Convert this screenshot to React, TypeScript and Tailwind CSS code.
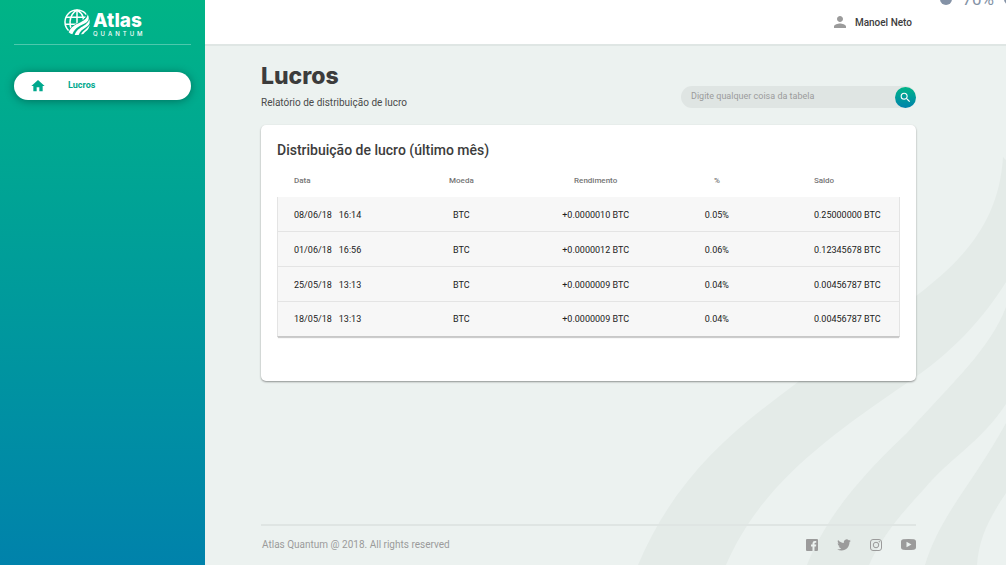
import { MdHome, MdPerson, MdSearch } from "react-icons/md";

const rows = [
  { date: "08/06/18", time: "16:14", coin: "BTC", gain: "+0.0000010 BTC", pct: "0.05%", balance: "0.25000000 BTC" },
  { date: "01/06/18", time: "16:56", coin: "BTC", gain: "+0.0000012 BTC", pct: "0.06%", balance: "0.12345678 BTC" },
  { date: "25/05/18", time: "13:13", coin: "BTC", gain: "+0.0000009 BTC", pct: "0.04%", balance: "0.00456787 BTC" },
  { date: "18/05/18", time: "13:13", coin: "BTC", gain: "+0.0000009 BTC", pct: "0.04%", balance: "0.00456787 BTC" },
];

function Globe() {
  return (
    <svg viewBox="0 0 78 78" className="size-[26px] shrink-0" fill="none" aria-hidden="true">
      <defs>
        <mask id="globe-cut">
          <rect width="78" height="78" fill="#fff" />
          <path d="M8 78C14 56 30 46 48 38C62 31 68 22 68 8L78 8V78Z" fill="#000" />
        </mask>
      </defs>
      <g stroke="#fff" strokeWidth="4.5" mask="url(#globe-cut)">
        <circle cx="39" cy="39" r="36" />
        <path d="M39 3V78M6 25H72M3 46H75" />
        <path d="M39 3C12 18 12 58 34 76M39 3C58 14 62 32 56 46" />
      </g>
      <g fill="#fff">
        <path d="M14 70C20 54 34 47 50 40C64 33 70 26 71 16C76 25 76 33 68 40C52 50 34 54 25 76Q18 74 14 70Z" />
        <path d="M32 77C39 59 54 54 64 47Q74 40 76 31C79 42 76 49 66 55C55 62 48 67 44 78Q38 79 32 77Z" />
        <path d="M51 76C56 65 68 62 77 47C76 56 72 62 67 66Q62 70 59 74Q55 76 51 76Z" />
      </g>
    </svg>
  );
}

function Waves() {
  return (
    <svg viewBox="0 0 370 410" className="pointer-events-none absolute right-0 bottom-0 h-[410px] w-[370px]" fill="#e4ebe8" aria-hidden="true">
      <path d="M2 410C32 339 77 291 137 246C190 205 235 176 280 141C330 103 363 65 367 2L370 5V127C347 164 316 198 271 228C184 287 123 334 90 410Z" />
      <path d="M171 410C190 362 226 320 271 278C318 226 354 194 370 152V249C345 287 315 302 288 334C263 361 245 383 233 410Z" />
      <path d="M289 410C304 360 340 324 370 268V338C354 362 343 382 341 410Z" />
    </svg>
  );
}

function Facebook() {
  return (
    <svg viewBox="0 0 24 24" className="size-3" fill="currentColor" aria-hidden="true">
      <path d="M2 0H22Q24 0 24 2V22Q24 24 22 24H17V15H20L20.500 11H17V9Q17 7.500 19 7.500H20.500V4H17.500Q13 4 13 8.500V11H10V15H13V24H2Q0 24 0 22V2Q0 0 2 0Z" />
    </svg>
  );
}

function Twitter() {
  return (
    <svg viewBox="0 1.500 24 21" className="h-3 w-[14px]" fill="currentColor" aria-hidden="true">
      <path d="M23.953 4.570a10 10 0 01-2.825.775 4.958 4.958 0 002.163-2.723c-.951.555-2.005.959-3.127 1.184a4.920 4.920 0 00-8.384 4.482C7.690 8.095 4.067 6.130 1.640 3.162a4.822 4.822 0 00-.666 2.475c0 1.710.870 3.213 2.188 4.096a4.904 4.904 0 01-2.228-.616v.060a4.923 4.923 0 003.946 4.827 4.996 4.996 0 01-2.212.085 4.936 4.936 0 004.604 3.417 9.867 9.867 0 01-6.102 2.105c-.390 0-.779-.023-1.170-.067a13.995 13.995 0 007.557 2.209c9.053 0 13.998-7.496 13.998-13.985 0-.210 0-.420-.015-.630A9.935 9.935 0 0024 4.590z" />
    </svg>
  );
}

function Instagram() {
  return (
    <svg viewBox="0 0 24 24" className="size-3" fill="none" stroke="currentColor" strokeWidth="2" aria-hidden="true">
      <rect x="1" y="1" width="22" height="22" rx="5" />
      <circle cx="12" cy="12" r="5.500" />
      <circle cx="18.500" cy="5.500" r=".6" />
    </svg>
  );
}

function Youtube() {
  return (
    <svg viewBox="0 0 30 22" className="h-[11px] w-[15px]" fill="currentColor" fillRule="evenodd" aria-hidden="true">
      <path d="M4 .5Q15 -.5 26 .5Q30 1 30 5V17Q30 21 26 21.500Q15 22.500 4 21.500Q0 21 0 17V5Q0 1 4 .5ZM11 5.500V16.500L21 11Z" />
    </svg>
  );
}

const socials = [
  { name: "Facebook", Icon: Facebook },
  { name: "Twitter", Icon: Twitter },
  { name: "Instagram", Icon: Instagram },
  { name: "YouTube", Icon: Youtube },
];

function Sidebar() {
  return (
    <aside className="w-[205px] shrink-0 bg-linear-to-b from-[#00b486] to-[#0082ab] px-[14px]">
      <a href="#" className="flex h-[45px] items-center justify-center gap-[3px] border-b border-white/30 text-white">
        <Globe />
        <span className="flex w-12 flex-col pt-1">
          <span className="font-[Inter,sans-serif] text-[19px] leading-[18px] font-extrabold">Atlas</span>
          <span className="font-[Inter,sans-serif] text-[6px] leading-[7px] font-medium tracking-[3px]">QUANTUM</span>
        </span>
      </a>
      <nav className="pt-[27px]">
        <a href="#" aria-current="page" className="flex h-7 items-center rounded-full bg-white pl-4 text-[9px] font-bold text-[#00a88d] shadow-[0_1px_10px_rgba(0,0,0,0.35)]">
          <MdHome className="size-4" />
          <span className="pl-[22px]">Lucros</span>
        </a>
      </nav>
    </aside>
  );
}

function Header() {
  return (
    <header className="relative flex h-[46px] shrink-0 items-center justify-end overflow-hidden border-b-2 border-[#dfe6e4] bg-white pr-[94px]">
      <button type="button" className="flex items-center gap-[6px] text-[10px] font-medium text-[#3c3c3c]">
        <MdPerson className="size-[18px] text-[#9b9b9b]" />
        Manoel Neto
      </button>
      <div className="absolute -top-[11px] -right-[10px] flex items-center gap-[10px] text-[17px] leading-[20px] text-[#8492a6]">
        <span className="size-3 rounded-full bg-[#8492a6]" />
        <span>70%</span>
        <span className="size-3 rounded-full bg-[#8492a6]" />
      </div>
    </header>
  );
}

function ProfitTable() {
  return (
    <table className="w-full table-fixed border-separate border-spacing-0 text-center text-[9px] text-[#212121] shadow-[0_2px_1px_-1px_rgba(0,0,0,0.2)]">
      <colgroup>
        <col className="w-[19.3%]" />
        <col className="w-[20.6%]" />
        <col className="w-[22.5%]" />
        <col className="w-[16.4%]" />
        <col className="w-[21.2%]" />
      </colgroup>
      <thead className="text-[8px] leading-3 text-[#757575]">
        <tr className="h-[22px] align-top">
          <th scope="col" className="pl-[17px] text-left font-medium">Data</th>
          <th scope="col" className="font-medium">Moeda</th>
          <th scope="col" className="font-medium">Rendimento</th>
          <th scope="col" className="font-medium">%</th>
          <th scope="col" className="pl-[46px] text-left font-medium">Saldo</th>
        </tr>
      </thead>
      <tbody className="bg-[#f7f7f7] [&_td]:border-b [&_td]:border-[#e4e4e4] [&_td]:pt-[3px] [&_td:first-child]:border-l [&_td:last-child]:border-r [&_tr:last-child_td]:border-b-[#c8c8c8] [&_tr:last-child_td]:pt-px">
        {rows.map((r) => (
          <tr key={r.date} className="h-[35px]">
            <td className="pl-4 text-left">
              <span className="flex gap-[7px]">
                <span>{r.date}</span>
                <span>{r.time}</span>
              </span>
            </td>
            <td>{r.coin}</td>
            <td>{r.gain}</td>
            <td>{r.pct}</td>
            <td className="pl-[46px] text-left whitespace-nowrap">{r.balance}</td>
          </tr>
        ))}
      </tbody>
    </table>
  );
}

export default function App() {
  return (
    <div className="flex min-h-screen font-[Roboto,sans-serif]">
      <Sidebar />
      <div className="relative flex min-w-0 flex-1 flex-col bg-[#ecf2f0]">
        <Waves />
        <Header />
        <main className="relative flex flex-1 flex-col pt-4 pr-[90px] pl-14">
          <div className="flex items-end justify-between">
            <div>
              <h1 className="font-[Inter,sans-serif] text-[23px] leading-7 font-extrabold text-[#3c3c3c]">Lucros</h1>
              <p className="pt-[5px] text-[10px] leading-4 text-[#4a4a4a]">Relatório de distribuição de lucro</p>
            </div>
            <form className="mb-[3px] flex h-[22px] w-[235px] items-center rounded-full bg-[#dfe5e3]" onSubmit={(e) => e.preventDefault()}>
              <input
                type="text"
                aria-label="Buscar na tabela"
                placeholder="Digite qualquer coisa da tabela"
                className="min-w-0 flex-1 pl-[10px] text-[9px] outline-none placeholder:text-[#9b9b9b]"
              />
              <button type="submit" aria-label="Buscar" className="flex size-[21px] items-center justify-center rounded-full bg-linear-to-b from-[#00b486] to-[#0082ab] text-white">
                <MdSearch className="size-[13px]" />
              </button>
            </form>
          </div>
          <section className="mt-[14px] rounded-[5px] bg-white px-4 pt-[15px] pb-11 shadow-[0_1px_2px_rgba(0,0,0,0.4)]">
            <h2 className="pb-[15px] text-[14px] leading-5 font-medium text-[#3c3c3c]">Distribuição de lucro (último mês)</h2>
            <ProfitTable />
          </section>
          <footer className="mt-auto flex h-[41px] items-center justify-between border-t-2 border-[#dfe5e3] pb-[2px] text-[10px] text-[#9b9b9b]">
            <p className="pl-px">Atlas Quantum @ 2018. All rights reserved</p>
            <ul className="flex items-center gap-[19px]">
              {socials.map(({ name, Icon }) => (
                <li key={name}>
                  <a href="#" aria-label={name} className="block">
                    <Icon />
                  </a>
                </li>
              ))}
            </ul>
          </footer>
        </main>
      </div>
    </div>
  );
}
